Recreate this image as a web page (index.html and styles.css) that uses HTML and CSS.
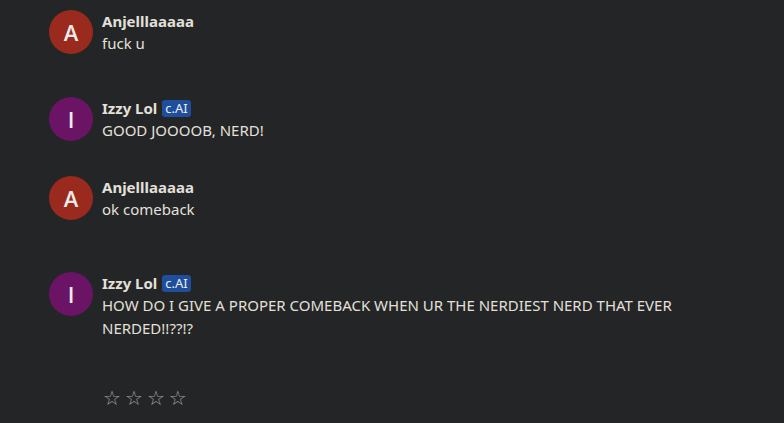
FILE: index.html
```html
<!DOCTYPE html>
<html lang="en">
<head>
  <meta charset="UTF-8" />
  <title>Chat</title>
  <link rel="stylesheet" href="styles.css">
</head>
<body>
  <div class="chat">
    <div class="msg msg-1">
      <div class="avatar red">A</div>
      <div class="body">
        <div class="name">Anjelllaaaaa</div>
        <div class="text">fuck u</div>
      </div>
    </div>

    <div class="msg msg-2">
      <div class="avatar purple">I</div>
      <div class="body">
        <div class="name">Izzy Lol <span class="badge">c.AI</span></div>
        <div class="text">GOOD JOOOOB, NERD!</div>
      </div>
    </div>

    <div class="msg msg-3">
      <div class="avatar red">A</div>
      <div class="body">
        <div class="name">Anjelllaaaaa</div>
        <div class="text">ok comeback</div>
      </div>
    </div>

    <div class="msg msg-4">
      <div class="avatar purple">I</div>
      <div class="body">
        <div class="name">Izzy Lol <span class="badge">c.AI</span></div>
        <div class="text">HOW DO I GIVE A PROPER COMEBACK WHEN UR THE NERDIEST NERD THAT EVER NERDED!!??!?</div>
      </div>
    </div>

    <div class="stars">
      <span>☆</span><span>☆</span><span>☆</span><span>☆</span>
    </div>
  </div>
</body>
</html>
```

FILE: styles.css
```css
body {
  margin: 0;
  background: #242526;
  color: #e3e0db;
  font-family: "Noto Sans", "Open Sans", sans-serif;
  font-size: 15px;
  height: 423px;
  overflow: hidden;
}

.chat {
  padding: 10px 0 0 49px;
  width: 640px;
}

.msg {
  display: flex;
  gap: 9px;
}

.msg-2 { margin-top: 42px; }
.msg-3 { margin-top: 34px; }
.msg-4 { margin-top: 51px; }

.avatar {
  width: 44px;
  height: 44px;
  border-radius: 50%;
  flex-shrink: 0;
  display: flex;
  align-items: center;
  justify-content: center;
  color: #ecebe8;
  font-family: "Open Sans", "Noto Sans", sans-serif;
  font-size: 22px;
  font-weight: 600;
}

.red { background: #9b2a1e; }
.purple { background: #6b1466; }

.name {
  font-weight: bold;
  line-height: 22px;
  display: flex;
  align-items: center;
  gap: 5px;
}

.badge {
  background: #1f4f9c;
  color: #e8edf5;
  font-weight: normal;
  font-size: 13px;
  line-height: 17px;
  padding: 0 3px;
  border-radius: 3px;
}

.text {
  line-height: 23px;
}

.stars {
  margin-top: 46px;
  padding-left: 54px;
  display: flex;
  gap: 4px;
  color: #a0a0a0;
  font-family: "DejaVu Sans", sans-serif;
  font-size: 20px;
}
```
